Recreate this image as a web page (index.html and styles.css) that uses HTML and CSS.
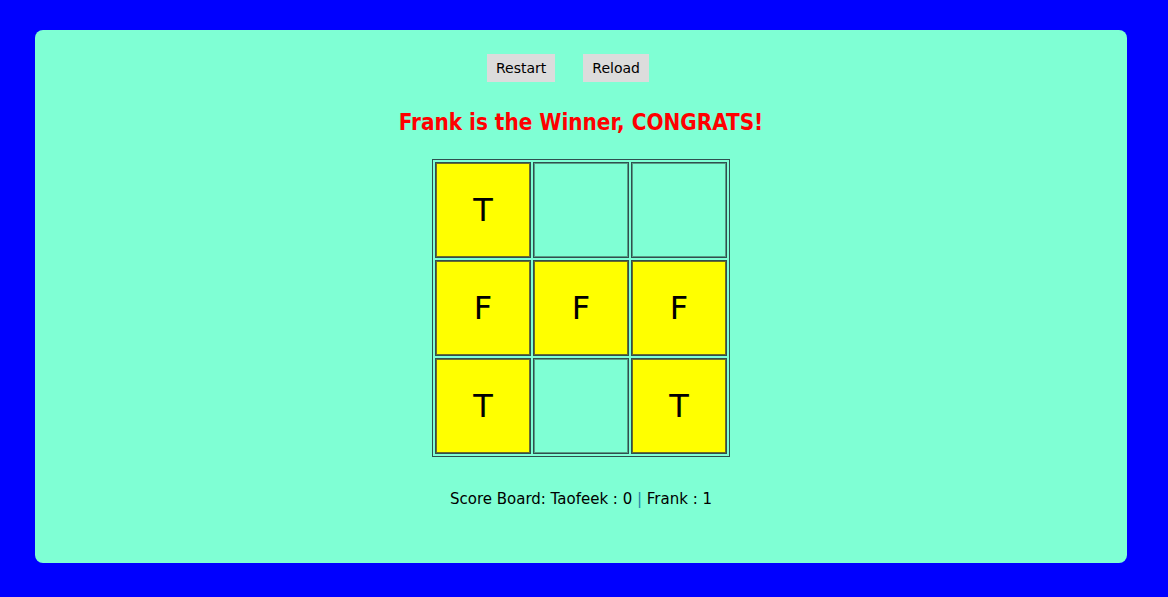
FILE: index.html
```html
<!DOCTYPE html>
<html>
<head>
<meta charset="utf-8">
<link rel="stylesheet" href="styles.css">
</head>
<body>
<div class="card">
  <div class="controls">
    <button class="btn">Restart</button>
    <button class="btn">Reload</button>
  </div>
  <h1 class="status">Frank is the Winner, CONGRATS!</h1>
  <table class="board">
    <tr><td class="filled">T</td><td></td><td></td></tr>
    <tr><td class="filled">F</td><td class="filled">F</td><td class="filled">F</td></tr>
    <tr><td class="filled">T</td><td></td><td class="filled">T</td></tr>
  </table>
  <p class="score">Score Board: Taofeek : 0 <span class="sep">|</span> Frank : 1</p>
</div>
</body>
</html>
```
FILE: styles.css
```css
html, body {
  margin: 0;
  height: 100%;
}
body {
  background: #0000ff;
  padding: 30px 41px 34px 35px;
  box-sizing: border-box;
  font-family: "DejaVu Sans", "Liberation Sans", sans-serif;
}
.card {
  background: #7fffd4;
  border-radius: 8px;
  height: 533px;
  display: flex;
  flex-direction: column;
  align-items: center;
  padding-top: 24px;
  box-sizing: border-box;
}
.controls {
  display: flex;
  gap: 28px;
  margin-left: -26px;
}
.btn {
  background: #dcdcdc;
  border: none;
  height: 28px;
  padding: 0 9px;
  font-family: "DejaVu Sans", sans-serif;
  font-size: 14px;
  color: #000;
  border-radius: 0;
}
.status {
  margin: 26px 0 0;
  color: #ff0000;
  font-size: 22.3px;
  line-height: 28px;
  font-weight: bold;
  font-family: "DejaVu Sans Condensed", "DejaVu Sans", sans-serif;
}
.board {
  margin-top: 23px;
  border: 1px solid #2f4f4f;
  border-spacing: 2px;
  border-collapse: separate;
}
.board td {
  width: 94px;
  height: 94px;
  padding: 0;
  border: 1px solid #2f4f4f;
  box-shadow: inset 0 0 0 1px rgba(60, 90, 80, 0.6);
  text-align: center;
  vertical-align: middle;
  font-family: "DejaVu Sans", sans-serif;
  font-size: 32px;
  color: #000;
}
.board td.filled {
  background: #ffff00;
  box-shadow: inset 0 0 0 1px #6b6b2a;
}
.score {
  margin: 33px 0 0;
  font-size: 15px;
  line-height: 18px;
  color: #000;
}
.sep {
  color: #1f7fa8;
}
```
